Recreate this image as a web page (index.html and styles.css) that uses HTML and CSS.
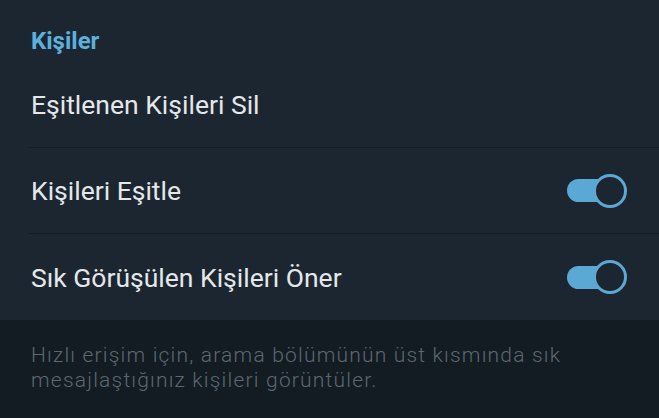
FILE: index.html
```html
<!DOCTYPE html>
<html lang="tr">
<head>
<meta charset="utf-8">
<link rel="stylesheet" href="styles.css">
</head>
<body>
<div class="screen">
  <div class="section-title">Kişiler</div>
  <div class="list">
    <div class="row"><span class="label">Eşitlenen Kişileri Sil</span></div>
    <div class="row"><span class="label">Kişileri Eşitle</span><span class="toggle on"><span class="track"></span><span class="knob"></span></span></div>
    <div class="row last"><span class="label">Sık Görüşülen Kişileri Öner</span><span class="toggle on"><span class="track"></span><span class="knob"></span></span></div>
  </div>
  <div class="footer">Hızlı erişim için, arama bölümünün üst kısmında sık mesajlaştığınız kişileri görüntüler.</div>
</div>
</body>
</html>
```
FILE: styles.css
```css
html, body {
  margin: 0;
  padding: 0;
  background: #131c23;
  font-family: Roboto, "Noto Sans", sans-serif;
}
.screen {
  width: 659px;
  height: 418px;
  display: flex;
  flex-direction: column;
}
.section-title {
  background: #1c2630;
  height: 62px;
  box-sizing: border-box;
  padding: 26px 0 0 31px;
  font-size: 24px;
  line-height: 30px;
  font-weight: 700;
  color: #5cb0de;
}
.list {
  background: #1c2630;
  padding-left: 28px;
}
.row {
  height: 85px;
  display: flex;
  align-items: center;
  justify-content: space-between;
  padding: 0 32px 0 3px;
  border-bottom: 1px solid #141c24;
}
.row.last { border-bottom: none; height: 86px; }
.label {
  font-size: 26.5px;
  color: #e4e8eb;
  font-weight: 400;
}
.toggle {
  position: relative;
  width: 60px;
  height: 34px;
  display: flex;
  align-items: center;
}
.track {
  width: 44px;
  height: 23px;
  border-radius: 12px;
  background: #5ba8d5;
}
.knob {
  position: absolute;
  right: 0;
  top: 0;
  width: 34px;
  height: 34px;
  box-sizing: border-box;
  border-radius: 50%;
  border: 3px solid #5ba8d5;
  background: #1c2630;
}
.footer {
  flex: 1;
  background: #131c23;
  padding: 23px 40px 0 31px;
  font-size: 21px;
  line-height: 25px;
  letter-spacing: 1.2px;
  font-weight: 300;
  color: #5d6770;
}
```
